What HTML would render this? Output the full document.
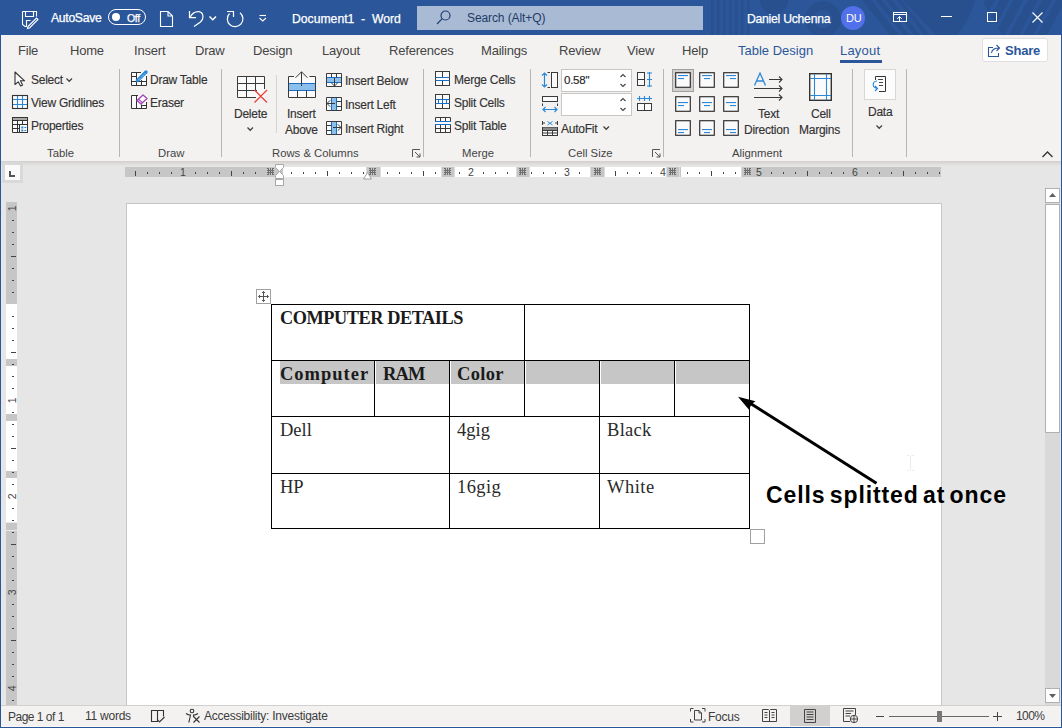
<!DOCTYPE html>
<html><head><meta charset="utf-8">
<style>
*{margin:0;padding:0;box-sizing:border-box}
html,body{width:1062px;height:728px;overflow:hidden;background:#e6e6e6;font-family:"Liberation Sans",sans-serif}
.a{position:absolute}
.t{position:absolute;white-space:nowrap;line-height:1}
svg{position:absolute;overflow:visible}
.tab{position:absolute;top:44px;font-size:13px;color:#444;white-space:nowrap;line-height:1;letter-spacing:-0.2px}
.rb{position:absolute;font-size:12px;letter-spacing:-0.25px;color:#333;white-space:nowrap;line-height:1;-webkit-text-stroke:0.15px #333}
.sep{position:absolute;top:69px;width:1px;height:88px;background:#b8b6b4}
.gl{position:absolute;top:148px;font-size:11.3px;letter-spacing:0;color:#444;white-space:nowrap;line-height:1}
.st{position:absolute;font-size:12px;letter-spacing:-0.25px;color:#3c3c3c;white-space:nowrap;line-height:1}
.wt{position:absolute;color:#fff;font-size:11.8px;white-space:nowrap;line-height:1;-webkit-text-stroke:0.25px #fff}
</style></head><body>
<!-- TITLE BAR -->
<div class="a" style="left:0;top:0;width:1062px;height:35px;background:#2b579a;overflow:hidden">
  <svg width="1062" height="35" style="left:0;top:0">
    <defs><clipPath id="cp"><path d="M982 0 H1062 V35 H1002 Z"/></clipPath></defs>
    <g fill="#28508f">
      <rect x="711" y="0" width="2.5" height="35"/><rect x="717" y="0" width="2.5" height="35"/><rect x="723" y="0" width="2.5" height="35"/>
      <rect x="729" y="0" width="2.5" height="35"/><rect x="735" y="0" width="2.5" height="35"/><rect x="741" y="0" width="2.5" height="35"/><rect x="747" y="0" width="2.5" height="35"/>
      <circle cx="774" cy="0" r="14"/>
      <path d="M862 0 H871 L899 35 H890 Z"/><path d="M875.5 0 H881.5 L909.5 35 H903.5 Z"/><path d="M886 0 H892 L920 35 H914 Z"/><path d="M896.5 0 H901.5 L929.5 35 H924.5 Z"/>
      <path d="M903 0 H975 C972 12 966 25 957 35 H936 Z"/>
      <g clip-path="url(#cp)"><path d="M985 0 H995 L976 35 H966 Z"/><path d="M999.5 0 H1009.5 L990.5 35 H980.5 Z"/><path d="M1013.5 0 H1023.5 L1004.5 35 H994.5 Z"/><path d="M1028 0 H1038 L1019 35 H1009 Z"/><path d="M1042 0 H1052 L1033 35 H1023 Z"/><path d="M1056 0 H1066 L1047 35 H1037 Z"/></g>
    </g>
    <circle cx="823" cy="19" r="13.5" fill="none" stroke="#28508f" stroke-width="8.7"/>
  </svg>
  <!-- save icon -->
  <svg width="20" height="20" style="left:21px;top:10px" fill="none" stroke="#fff" stroke-width="1.1">
    <path d="M1.5 1.5 H15.5 V6.5 M1.5 1.5 V14.5 L4 16.5 H5.5 V10.5 H9.5"/>
    <path d="M4.5 1.5 V6.5 H12.5 V1.5"/>
    <path d="M7 16.5 L15.5 8 L17 9.5 L8.5 18 L6.5 18.5 Z"/>
  </svg>
  <div class="wt" style="left:51px;top:12px;font-size:12.2px;letter-spacing:-0.3px">AutoSave</div>
  <div class="a" style="left:108px;top:9px;width:38px;height:16px;border:1px solid #fff;border-radius:8px"></div>
  <div class="a" style="left:112px;top:13px;width:8px;height:8px;background:#fff;border-radius:50%"></div>
  <div class="wt" style="left:127px;top:13px;font-size:10.5px;letter-spacing:-0.3px">Off</div>
  <!-- new doc -->
  <svg width="14" height="16" style="left:160px;top:11px" fill="none" stroke="#fff" stroke-width="1.1">
    <path d="M0.5 0.5 H8 L12.5 5 V15.5 H0.5 Z M8 0.5 V5 H12.5"/>
  </svg>
  <!-- undo -->
  <svg width="18" height="18" style="left:187px;top:10px" fill="none" stroke="#fff" stroke-width="1.2">
    <path d="M2.5 1 V7.7 H9"/><path d="M3 7.5 C5 3 9 1.4 12 1.6 C14.5 2 16 4.5 16 7 C16 9 15 10.5 13.5 12 L7 16.6"/>
  </svg>
  <svg width="8" height="5" style="left:209px;top:16px" fill="none" stroke="#fff" stroke-width="1.5"><path d="M0.5 0.5 L3.75 3.75 L7 0.5"/></svg>
  <!-- redo -->
  <svg width="18" height="18" style="left:226px;top:10px" fill="none" stroke="#fff" stroke-width="1.2">
    <path d="M3.5 3.5 A7.8 7.8 0 1 0 14 2.8"/><path d="M1 1.5 H7.5 V7"/>
  </svg>
  <svg width="8" height="7" style="left:259px;top:15px" fill="none" stroke="#fff" stroke-width="1.1"><path d="M0.5 0.5 H7"/><path d="M0.5 3 L3.75 6 L7 3"/></svg>
  <div class="wt" style="left:292px;top:13px;font-size:12.2px;letter-spacing:0px;word-spacing:0px">Document1&nbsp; -&nbsp; Word</div>
  <!-- search -->
  <div class="a" style="left:417px;top:6px;width:286px;height:24px;background:#a9bad4"></div>
  <svg width="16" height="16" style="left:436px;top:10px" fill="none" stroke="#1f3f6f" stroke-width="1.2">
    <circle cx="9.5" cy="5.5" r="4.5"/><path d="M6.3 8.7 L1 14"/>
  </svg>
  <div class="t" style="left:467px;top:12px;font-size:12px;color:#1e3a66;letter-spacing:-0.1px">Search (Alt+Q)</div>
  <div class="wt" style="left:747px;top:13px;font-size:12.2px;letter-spacing:-0.25px">Daniel Uchenna</div>
  <div class="a" style="left:841px;top:6px;width:24px;height:24px;border-radius:50%;background:#5170ea"></div>
  <div class="wt" style="left:846px;top:13px;font-size:11px;letter-spacing:-0.2px;-webkit-text-stroke:0">DU</div>
  <!-- ribbon display -->
  <svg width="16" height="12" style="left:893px;top:12px" fill="none" stroke="#fff" stroke-width="1">
    <rect x="0.5" y="0.5" width="13" height="9"/><path d="M0.5 2.5 H13.5"/><path d="M6.5 9.5 V4.5 M4.2 6.8 L6.5 4.5 L8.8 6.8"/>
  </svg>
  <div class="a" style="left:941px;top:16px;width:11px;height:1px;background:#fff"></div>
  <div class="a" style="left:987px;top:12px;width:10px;height:10px;border:1px solid #fff"></div>
  <svg width="12" height="12" style="left:1032px;top:12px" fill="none" stroke="#fff" stroke-width="1.1"><path d="M0.5 0.5 L10.5 10.5 M10.5 0.5 L0.5 10.5"/></svg>
</div>
<!-- blue window borders -->
<div class="a" style="left:0;top:35px;width:1px;height:693px;background:#2b579a"></div>
<div class="a" style="left:1061px;top:35px;width:1px;height:693px;background:#2b579a"></div>

<!-- RIBBON -->
<div class="a" style="left:1px;top:35px;width:1060px;height:126px;background:#f3f2f1"></div>
<div class="tab" style="left:18px">File</div>
<div class="tab" style="left:70px">Home</div>
<div class="tab" style="left:134px">Insert</div>
<div class="tab" style="left:195px">Draw</div>
<div class="tab" style="left:253px">Design</div>
<div class="tab" style="left:322px">Layout</div>
<div class="tab" style="left:389px">References</div>
<div class="tab" style="left:481px">Mailings</div>
<div class="tab" style="left:559px">Review</div>
<div class="tab" style="left:627px">View</div>
<div class="tab" style="left:682px">Help</div>
<div class="tab" style="left:738px;color:#2b579a;letter-spacing:0">Table Design</div>
<div class="tab" style="left:840px;color:#2b579a;letter-spacing:0.2px">Layout</div>
<div class="a" style="left:840px;top:60px;width:42px;height:3px;background:#2b579a"></div>
<div class="a" style="left:982px;top:38px;width:66px;height:24px;background:#fff;border:1px solid #e1dfdd;border-radius:3px"></div>
<svg width="14" height="14" style="left:988px;top:43px" fill="none" stroke="#2b579a" stroke-width="1.1">
  <path d="M5 4.5 H0.5 V13.5 H10.5 V10"/><path d="M3.5 10 C4 6.5 7 5 11 5 M8.5 2 L11.5 5 L8.5 8"/>
</svg>
<div class="t" style="left:1005px;top:44px;font-size:13px;color:#2b579a;font-weight:bold;letter-spacing:-0.2px">Share</div>

<!-- RIBBON GROUPS -->
<div class="sep" style="left:119px"></div>
<div class="sep" style="left:221px"></div>
<div class="sep" style="left:423px"></div>
<div class="sep" style="left:530px"></div>
<div class="sep" style="left:663px"></div>
<div class="sep" style="left:852px"></div>
<div class="sep" style="left:906px"></div>
<div class="a" style="left:276px;top:75px;width:1px;height:58px;background:#d6d4d2"></div>
<!-- Table group -->
<svg width="12" height="16" style="left:14px;top:71px" fill="#fafafa" stroke="#333" stroke-width="1.1"><path d="M1 1 V13.5 L4.2 10.8 L6.6 15 L8.6 14 L6.4 9.8 H10.6 Z" stroke-linejoin="round"/></svg>
<div class="rb" style="left:31px;top:74px">Select</div>
<svg width="7" height="5" style="left:66px;top:78px" fill="none" stroke="#444" stroke-width="1"><path d="M0.5 0.5 L3.2 3.3 L6 0.5" stroke-width="1.3"/></svg>
<svg width="16" height="15" style="left:12px;top:95px" fill="none">
  <rect x="0.5" y="0.5" width="15" height="13" fill="#fafafa" stroke="#333" stroke-width="1.1"/>
  <path d="M5.5 1 V13 M10.5 1 V13 M1 4.5 H15 M1 9.5 H15" stroke="#2b88d8" stroke-width="1.1"/>
</svg>
<div class="rb" style="left:31px;top:97px">View Gridlines</div>
<svg width="17" height="17" style="left:12px;top:117px" fill="none" stroke="#333">
  <rect x="0.5" y="0.5" width="15" height="15" fill="#fafafa" stroke="none"/>
  <rect x="0.5" y="0.5" width="15" height="3" fill="#a8a8a8"/>
  <path d="M0.5 3.5 V15.5 H7.5 M15.5 3.5 V7.5 M5.5 3.5 V15.5 M0.5 7.5 H7.5 M0.5 11.5 H7.5 M10.5 3.5 V7"/>
  <rect x="7.5" y="7.5" width="8" height="8" fill="#fafafa"/>
  <rect x="9.3" y="9.5" width="2" height="2" fill="#2b88d8" stroke="none"/><rect x="9.3" y="12.5" width="2" height="2" fill="#2b88d8" stroke="none"/>
  <rect x="12.3" y="10" width="2" height="1" fill="#2b88d8" stroke="none"/><rect x="12.3" y="13" width="2" height="1" fill="#2b88d8" stroke="none"/>
</svg>
<div class="rb" style="left:31px;top:120px">Properties</div>
<div class="gl" style="left:47px">Table</div>
<!-- Draw group -->
<svg width="18" height="16" style="left:131px;top:71px" fill="none" stroke="#333">
  <rect x="0.5" y="1.5" width="15" height="13" fill="#fafafa" stroke="none"/>
  <path d="M0.5 1.5 H10 M0.5 1.5 V14.5 H15.5 V5 M5.5 1.5 V14.5 M10.5 9 V14.5 M0.5 5.5 H5.5 M0.5 10.5 H15.5"/>
  <path d="M6.5 9.5 L15 1" stroke="#2b88d8" stroke-width="3.4" stroke-linecap="round"/>
  <path d="M7.5 9 L14.5 2" stroke="#fff" stroke-width="0.8" stroke-dasharray="1 1"/>
</svg>
<div class="rb" style="left:150px;top:74px">Draw Table</div>
<svg width="18" height="16" style="left:131px;top:95px" fill="none" stroke="#333">
  <rect x="0.5" y="0.5" width="15" height="13" fill="#fafafa" stroke="none"/>
  <path d="M0.5 0.5 H7 M0.5 0.5 V13.5 H15.5 V7 M5.5 0.5 V13.5 M10.5 9.5 V13.5 M10.5 10.5 H15.5"/>
  <path d="M6 5.5 L12 0 L16 3.5 L10 9 Z" fill="#fff" stroke="#a347ba" stroke-width="1.4" stroke-linejoin="round"/>
  <path d="M7.5 4.2 L11.3 7.6" stroke="#a347ba" stroke-width="1.2"/>
</svg>
<div class="rb" style="left:150px;top:97px">Eraser</div>
<div class="gl" style="left:158px">Draw</div>
<!-- Rows & Columns -->
<svg width="32" height="28" style="left:237px;top:76px" fill="none" stroke="#3a3a3a">
  <rect x="0.5" y="0.5" width="27" height="21" fill="#fafafa" stroke="none"/>
  <path d="M0.5 0.5 H27.5 V13 M0.5 0.5 V21.5 H19 M9.5 0.5 V21.5 M18.5 0.5 V14 M0.5 7.5 H27.5 M0.5 14.5 H20"/>
  <path d="M17.5 14 L30 26.5 M30 14 L17.5 26.5" stroke="#e8413e" stroke-width="1.3"/>
</svg>
<div class="rb" style="left:234px;top:108px">Delete</div>
<svg width="7" height="5" style="left:247px;top:127px" fill="none" stroke="#444"><path d="M0.5 0.5 L3.2 3.3 L6 0.5" stroke-width="1.3"/></svg>
<svg width="30" height="28" style="left:288px;top:71px" fill="none" stroke="#3a3a3a">
  <rect x="0.5" y="5.5" width="27" height="21" fill="#fafafa" stroke="none"/>
  <rect x="0.5" y="12" width="27" height="7.5" fill="#8cc0ec" stroke="none"/>
  <path d="M0.5 12.5 H27.5 M0.5 19.5 H27.5" stroke="#1a6fc4"/>
  <path d="M6 5.5 H0.5 V26.5 H27.5 V5.5 H21.5 M9.5 19.5 V26.5 M18.5 19.5 V26.5"/>
  <path d="M13.5 15 V0.8 M7.5 6.8 L13.5 0.8 L19.5 6.8"/>
</svg>
<div class="rb" style="left:287px;top:108px">Insert</div>
<div class="rb" style="left:285px;top:124px">Above</div>
<svg width="17" height="15" style="left:326px;top:73px" fill="none" stroke="#3a3a3a">
  <rect x="0.5" y="0.5" width="15" height="13" fill="#fafafa" stroke="none"/>
  <rect x="0.5" y="4.5" width="15" height="5" fill="#8cc0ec" stroke="none"/>
  <path d="M0.5 4.5 H15.5 M0.5 9.5 H15.5" stroke="#1a6fc4"/>
  <path d="M0.5 0.5 H15.5 V13.5 H0.5 Z M5.5 0.5 V4.5 M10.5 0.5 V4.5"/>
  <path d="M8.5 5 V13 M5.3 9.8 L8.5 13 L11.7 9.8"/>
</svg>
<div class="rb" style="left:345px;top:75px">Insert Below</div>
<svg width="17" height="15" style="left:326px;top:97px" fill="none" stroke="#3a3a3a">
  <rect x="0.5" y="0.5" width="15" height="13" fill="#fafafa" stroke="none"/>
  <rect x="5.5" y="0.5" width="5" height="13" fill="#8cc0ec" stroke="none"/>
  <path d="M5.5 0.5 V13.5 M10.5 0.5 V13.5" stroke="#1a6fc4"/>
  <path d="M0.5 0.5 H15.5 V13.5 H0.5 Z M10.5 4.5 H15.5 M10.5 9.5 H15.5"/>
  <path d="M9 6.5 H1 M4.2 3.3 L1 6.5 L4.2 9.7"/>
</svg>
<div class="rb" style="left:345px;top:99px">Insert Left</div>
<svg width="17" height="15" style="left:326px;top:121px" fill="none" stroke="#3a3a3a">
  <rect x="0.5" y="0.5" width="15" height="13" fill="#fafafa" stroke="none"/>
  <rect x="5.5" y="0.5" width="5" height="13" fill="#8cc0ec" stroke="none"/>
  <path d="M5.5 0.5 V13.5 M10.5 0.5 V13.5" stroke="#1a6fc4"/>
  <path d="M0.5 0.5 H15.5 V13.5 H0.5 Z M0.5 4.5 H5.5 M0.5 9.5 H5.5"/>
  <path d="M7 6.5 H15 M11.8 3.3 L15 6.5 L11.8 9.7"/>
</svg>
<div class="rb" style="left:345px;top:123px">Insert Right</div>
<div class="gl" style="left:272px">Rows &amp; Columns</div>
<svg width="9" height="9" style="left:412px;top:149px" fill="none" stroke="#555"><path d="M0.5 0.5 H8 M0.5 0.5 V8 M3 3 L8 8 M8 4.5 V8 H4.5"/></svg>
<!-- Merge -->
<svg width="16" height="16" style="left:435px;top:71px" fill="none" stroke="#3a3a3a">
  <rect x="0.5" y="0.5" width="14" height="14" fill="#fafafa"/>
  <path d="M7.5 0.5 V6 M7.5 9.5 V14.5"/>
  <path d="M0.5 6.5 H14.5 M0.5 9.5 H14.5" stroke="#1a6fc4"/>
</svg>
<div class="rb" style="left:454px;top:74px">Merge Cells</div>
<svg width="16" height="16" style="left:435px;top:94px" fill="none" stroke="#3a3a3a">
  <rect x="0.5" y="0.5" width="14" height="14" fill="#fafafa"/>
  <path d="M7.5 0.5 V5 M7.5 10 V14.5"/>
  <path d="M0.5 5.5 H14.5 M0.5 9.5 H14.5 M3.5 5.5 V9.5 M7.5 5.5 V9.5 M11.5 5.5 V9.5" stroke="#1a6fc4"/>
</svg>
<div class="rb" style="left:454px;top:97px">Split Cells</div>
<svg width="17" height="17" style="left:435px;top:117px" fill="none" stroke="#3a3a3a">
  <rect x="0.5" y="0.5" width="15" height="15" fill="#fafafa" stroke="none"/>
  <path d="M0.5 4.5 V0.5 H15.5 V4.5 M5.5 0.5 V4.5 M10.5 0.5 V4.5 M0.5 7.5 V15.5 H15.5 V7.5 M0.5 11.5 H15.5 M5.5 7.5 V15.5 M10.5 7.5 V15.5"/>
  <path d="M0 4.5 H16 M0 7.5 H16" stroke="#1a6fc4"/>
</svg>
<div class="rb" style="left:454px;top:120px">Split Table</div>
<div class="gl" style="left:462px">Merge</div>
<!-- Cell Size -->
<svg width="17" height="17" style="left:542px;top:72px" fill="none" stroke="#3a3a3a">
  <rect x="9.5" y="0.5" width="6" height="15" fill="#fafafa"/>
  <path d="M5.5 0.5 H8 M5.5 15.5 H8"/>
  <path d="M2.5 1 V15 M0 3.5 L2.5 1 L5 3.5 M0 12.5 L2.5 15 L5 12.5" stroke="#2b88d8" stroke-width="1.2"/>
</svg>
<div class="a" style="left:561px;top:69px;width:71px;height:23px;background:#fff;border:1px solid #c8c6c4"></div>
<div class="rb" style="left:564px;top:75px;font-size:11.5px;color:#222">0.58"</div>
<svg width="7" height="14" style="left:620px;top:74px" fill="none" stroke="#444" stroke-width="1.1"><path d="M0.5 3 L3 0.5 L5.5 3 M0.5 10 L3 12.5 L5.5 10"/></svg>
<svg width="17" height="16" style="left:637px;top:72px" fill="none" stroke="#3a3a3a">
  <rect x="0.5" y="0.5" width="7" height="13" fill="#fafafa"/><path d="M0.5 7.5 H7.5"/>
  <path d="M12.5 0 V15 M10 1 H15 M10 7.5 H15 M10 14 H15" stroke="#2b88d8" stroke-width="1.1"/>
</svg>
<svg width="17" height="17" style="left:542px;top:96px" fill="none" stroke="#3a3a3a">
  <rect x="0.5" y="0.5" width="15" height="5" fill="#fafafa"/>
  <path d="M0.5 7.5 V10 M15.5 7.5 V10"/>
  <path d="M1 13.5 H15 M3.5 11 L1 13.5 L3.5 16 M12.5 11 L15 13.5 L12.5 16" stroke="#2b88d8" stroke-width="1.2"/>
</svg>
<div class="a" style="left:561px;top:93px;width:71px;height:23px;background:#fff;border:1px solid #c8c6c4"></div>
<svg width="7" height="14" style="left:620px;top:98px" fill="none" stroke="#444" stroke-width="1.1"><path d="M0.5 3 L3 0.5 L5.5 3 M0.5 10 L3 12.5 L5.5 10"/></svg>
<svg width="16" height="16" style="left:637px;top:96px" fill="none" stroke="#3a3a3a">
  <rect x="0.5" y="7.5" width="14" height="7" fill="#fafafa"/><path d="M7.5 7.5 V14.5"/>
  <path d="M0 2.5 H15 M2.5 0 V5 M7.5 0 V5 M12.5 0 V5" stroke="#2b88d8" stroke-width="1.1"/>
</svg>
<svg width="17" height="16" style="left:542px;top:121px" fill="none" stroke="#3a3a3a">
  <path d="M0.5 0 V4 M15.5 0 V4 M0.5 2 H3 M13 2 H15.5"/>
  <path d="M5.5 0.5 L10.5 4 M10.5 0.5 L5.5 4" stroke="#2b88d8" stroke-width="1"/>
  <rect x="0.5" y="6.5" width="15" height="8" fill="#fafafa"/>
  <rect x="1" y="6.5" width="14" height="3" fill="#8a8a8a" stroke="none"/>
  <path d="M0.5 9.5 H15.5 M0.5 12 H15.5 M5.5 9.5 V14.5 M10.5 9.5 V14.5"/>
</svg>
<div class="rb" style="left:561px;top:123px">AutoFit</div>
<svg width="7" height="5" style="left:603px;top:126px" fill="none" stroke="#444"><path d="M0.5 0.5 L3.2 3.3 L6 0.5" stroke-width="1.3"/></svg>
<div class="gl" style="left:568px">Cell Size</div>
<svg width="9" height="9" style="left:652px;top:149px" fill="none" stroke="#555"><path d="M0.5 0.5 H8 M0.5 0.5 V8 M3 3 L8 8 M8 4.5 V8 H4.5"/></svg>
<!-- Alignment -->
<div class="a" style="left:672px;top:69px;width:22px;height:23px;background:#d2d0ce;border:1px solid #a19f9d"></div>
<svg width="16" height="16" style="left:675px;top:72px"><rect x="0.7" y="0.7" width="14.6" height="14.6" fill="#fafafa" stroke="#333" stroke-width="1.2"/><rect x="3" y="3" width="10" height="1.1" fill="#2b88d8"/><rect x="3" y="6" width="6" height="1.1" fill="#2b88d8"/></svg>
<svg width="16" height="16" style="left:699px;top:72px"><rect x="0.7" y="0.7" width="14.6" height="14.6" fill="#fafafa" stroke="#333" stroke-width="1.2"/><rect x="3" y="3" width="10" height="1.1" fill="#2b88d8"/><rect x="5" y="6" width="6" height="1.1" fill="#2b88d8"/></svg>
<svg width="16" height="16" style="left:723px;top:72px"><rect x="0.7" y="0.7" width="14.6" height="14.6" fill="#fafafa" stroke="#333" stroke-width="1.2"/><rect x="3" y="3" width="10" height="1.1" fill="#2b88d8"/><rect x="7" y="6" width="6" height="1.1" fill="#2b88d8"/></svg>
<svg width="16" height="16" style="left:675px;top:96px"><rect x="0.7" y="0.7" width="14.6" height="14.6" fill="#fafafa" stroke="#333" stroke-width="1.2"/><rect x="3" y="6" width="10" height="1.1" fill="#2b88d8"/><rect x="3" y="9" width="6" height="1.1" fill="#2b88d8"/></svg>
<svg width="16" height="16" style="left:699px;top:96px"><rect x="0.7" y="0.7" width="14.6" height="14.6" fill="#fafafa" stroke="#333" stroke-width="1.2"/><rect x="3" y="6" width="10" height="1.1" fill="#2b88d8"/><rect x="5" y="9" width="6" height="1.1" fill="#2b88d8"/></svg>
<svg width="16" height="16" style="left:723px;top:96px"><rect x="0.7" y="0.7" width="14.6" height="14.6" fill="#fafafa" stroke="#333" stroke-width="1.2"/><rect x="3" y="6" width="10" height="1.1" fill="#2b88d8"/><rect x="7" y="9" width="6" height="1.1" fill="#2b88d8"/></svg>
<svg width="16" height="16" style="left:675px;top:120px"><rect x="0.7" y="0.7" width="14.6" height="14.6" fill="#fafafa" stroke="#333" stroke-width="1.2"/><rect x="3" y="9" width="10" height="1.1" fill="#2b88d8"/><rect x="3" y="12" width="6" height="1.1" fill="#2b88d8"/></svg>
<svg width="16" height="16" style="left:699px;top:120px"><rect x="0.7" y="0.7" width="14.6" height="14.6" fill="#fafafa" stroke="#333" stroke-width="1.2"/><rect x="3" y="9" width="10" height="1.1" fill="#2b88d8"/><rect x="5" y="12" width="6" height="1.1" fill="#2b88d8"/></svg>
<svg width="16" height="16" style="left:723px;top:120px"><rect x="0.7" y="0.7" width="14.6" height="14.6" fill="#fafafa" stroke="#333" stroke-width="1.2"/><rect x="3" y="9" width="10" height="1.1" fill="#2b88d8"/><rect x="7" y="12" width="6" height="1.1" fill="#2b88d8"/></svg>

<svg width="32" height="30" style="left:753px;top:72px" fill="none">
  <path d="M1.5 13.5 L7 1 L12.5 13.5 M3.5 9 H10.5" stroke="#2b88d8" stroke-width="1.3"/>
  <path d="M16 7.5 H29 M26 4.5 L29 7.5 L26 10.5 M1 16.5 H29 M26 13.5 L29 16.5 L26 19.5 M1 25.5 H29 M26 22.5 L29 25.5 L26 28.5" stroke="#3a3a3a" stroke-width="1.1"/>
</svg>
<div class="rb" style="left:758px;top:108px">Text</div>
<div class="rb" style="left:744px;top:124px">Direction</div>
<svg width="24" height="29" style="left:809px;top:73px" fill="none">
  <rect x="0.7" y="0.7" width="21.6" height="26.6" fill="#fafafa" stroke="#333" stroke-width="1.4"/>
  <path d="M5.5 1 V27 M17.5 1 V27 M1 5.5 H22 M1 22.5 H22" stroke="#2b88d8" stroke-width="1.1"/>
</svg>
<div class="rb" style="left:811px;top:108px">Cell</div>
<div class="rb" style="left:799px;top:124px">Margins</div>
<div class="gl" style="left:732px">Alignment</div>
<!-- Data -->
<div class="a" style="left:864px;top:69px;width:32px;height:31px;background:#fcfcfc;border:1px solid #d8d6d4"></div>
<svg width="16" height="17" style="left:871px;top:76px" fill="none">
  <path d="M4.5 4 V0.5 H14.5 V15.5 H8" stroke="#333"/><path d="M7 3.5 H12 M8 6.5 H12 M8 9.5 H12" stroke="#333" stroke-width="0.9"/>
  <path d="M6 5 C1.5 5.5 0.5 11 6 12.5 M4 10 L6.5 12.5 L4 15" stroke="#2b88d8" stroke-width="1.2"/>
</svg>
<div class="rb" style="left:868px;top:106px">Data</div>
<svg width="7" height="5" style="left:876px;top:125px" fill="none" stroke="#444"><path d="M0.5 0.5 L3.2 3.3 L6 0.5" stroke-width="1.3"/></svg>
<svg width="11" height="7" style="left:1042px;top:151px" fill="none" stroke="#333" stroke-width="1.3"><path d="M0.5 6 L5.5 1 L10.5 6"/></svg>
<!-- ribbon shadow -->
<div class="a" style="left:1px;top:161px;width:1060px;height:5px;background:linear-gradient(#d2d0ce,#e6e6e6)"></div>

<!-- RULER -->
<div class="a" style="left:2px;top:162px;width:21px;height:21px;background:#d9d9d9"></div>
<div class="a" style="left:5px;top:165px;width:15px;height:15px;background:#fafafa"></div>
<svg width="7" height="7" style="left:9px;top:171px"><path d="M0 0 H2 V4 H6 V6 H0 Z" fill="#555"/></svg>
<div class="a" style="left:125px;top:167px;width:816px;height:10px;background:#c6c6c6"></div>
<div class="a" style="left:283px;top:167px;width:84px;height:10px;background:#fff"></div>
<div class="a" style="left:380px;top:167px;width:62px;height:10px;background:#fff"></div>
<div class="a" style="left:454px;top:167px;width:63px;height:10px;background:#fff"></div>
<div class="a" style="left:529px;top:167px;width:63px;height:10px;background:#fff"></div>
<div class="a" style="left:604px;top:167px;width:63px;height:10px;background:#fff"></div>
<div class="a" style="left:681px;top:167px;width:61px;height:10px;background:#fff"></div>
<div class="t" style="left:180px;top:167px;font-size:10.5px;color:#444">1</div>
<div class="t" style="left:468px;top:167px;font-size:10.5px;color:#444">2</div>
<div class="t" style="left:564px;top:167px;font-size:10.5px;color:#444">3</div>
<div class="t" style="left:660px;top:167px;font-size:10.5px;color:#444">4</div>
<div class="t" style="left:756px;top:167px;font-size:10.5px;color:#444">5</div>
<div class="t" style="left:852px;top:167px;font-size:10.5px;color:#444">6</div>
<svg width="1062" height="200" style="left:0;top:0" fill="none" stroke="#444" stroke-width="1"><path d="M135.5 171 V176 M147.5 172 V174 M159.5 172 V174 M171.5 172 V174 M195.5 172 V174 M207.5 172 V174 M219.5 172 V174 M231.5 171 V176 M243.5 172 V174 M255.5 172 V174 M267.5 172 V174 M291.5 172 V174 M303.5 172 V174 M315.5 172 V174 M327.5 171 V176 M339.5 172 V174 M351.5 172 V174 M363.5 172 V174 M387.5 172 V174 M399.5 172 V174 M411.5 172 V174 M423.5 171 V176 M435.5 172 V174 M447.5 172 V174 M459.5 172 V174 M483.5 172 V174 M495.5 172 V174 M507.5 172 V174 M519.5 171 V176 M531.5 172 V174 M543.5 172 V174 M555.5 172 V174 M579.5 172 V174 M591.5 172 V174 M603.5 172 V174 M615.5 171 V176 M627.5 172 V174 M639.5 172 V174 M651.5 172 V174 M675.5 172 V174 M687.5 172 V174 M699.5 172 V174 M711.5 171 V176 M723.5 172 V174 M735.5 172 V174 M747.5 172 V174 M771.5 172 V174 M783.5 172 V174 M795.5 172 V174 M807.5 171 V176 M819.5 172 V174 M831.5 172 V174 M843.5 172 V174 M867.5 172 V174 M879.5 172 V174 M891.5 172 V174 M903.5 171 V176 M915.5 172 V174 M927.5 172 V174 M939.5 172 V174 "/></svg>
<div class="a" style="left:264px;top:167px;width:11px;height:10px;background:#c6c6c6"></div>
<div class="a" style="left:366px;top:167px;width:15px;height:10px;background:#c6c6c6;border-left:1px solid #dcdcdc;border-right:1px solid #dcdcdc"></div>
<div class="a" style="left:441px;top:167px;width:14px;height:10px;background:#c6c6c6;border-left:1px solid #dcdcdc;border-right:1px solid #dcdcdc"></div>
<div class="a" style="left:516px;top:167px;width:14px;height:10px;background:#c6c6c6;border-left:1px solid #dcdcdc;border-right:1px solid #dcdcdc"></div>
<div class="a" style="left:590px;top:167px;width:15px;height:10px;background:#c6c6c6;border-left:1px solid #dcdcdc;border-right:1px solid #dcdcdc"></div>
<div class="a" style="left:666px;top:167px;width:14px;height:10px;background:#c6c6c6;border-left:1px solid #dcdcdc;border-right:1px solid #dcdcdc"></div>
<div class="a" style="left:741px;top:167px;width:14px;height:10px;background:#c6c6c6;border-left:1px solid #dcdcdc"></div>
<svg width="8" height="8" style="left:267px;top:168px"><path d="M0 0h1v1h-1zM1 0h1v1h-1zM3 0h1v1h-1zM5 0h1v1h-1zM6 0h1v1h-1zM1 1h1v1h-1zM3 1h1v1h-1zM5 1h1v1h-1zM0 2h1v1h-1zM1 2h1v1h-1zM2 2h1v1h-1zM3 2h1v1h-1zM4 2h1v1h-1zM5 2h1v1h-1zM6 2h1v1h-1zM1 3h1v1h-1zM3 3h1v1h-1zM5 3h1v1h-1zM0 4h1v1h-1zM1 4h1v1h-1zM2 4h1v1h-1zM3 4h1v1h-1zM4 4h1v1h-1zM5 4h1v1h-1zM6 4h1v1h-1zM1 5h1v1h-1zM3 5h1v1h-1zM5 5h1v1h-1zM0 6h1v1h-1zM1 6h1v1h-1zM3 6h1v1h-1zM5 6h1v1h-1zM6 6h1v1h-1z" fill="#6e6e6e"/></svg>
<svg width="8" height="8" style="left:369px;top:168px"><path d="M0 0h1v1h-1zM1 0h1v1h-1zM3 0h1v1h-1zM5 0h1v1h-1zM6 0h1v1h-1zM1 1h1v1h-1zM3 1h1v1h-1zM5 1h1v1h-1zM0 2h1v1h-1zM1 2h1v1h-1zM2 2h1v1h-1zM3 2h1v1h-1zM4 2h1v1h-1zM5 2h1v1h-1zM6 2h1v1h-1zM1 3h1v1h-1zM3 3h1v1h-1zM5 3h1v1h-1zM0 4h1v1h-1zM1 4h1v1h-1zM2 4h1v1h-1zM3 4h1v1h-1zM4 4h1v1h-1zM5 4h1v1h-1zM6 4h1v1h-1zM1 5h1v1h-1zM3 5h1v1h-1zM5 5h1v1h-1zM0 6h1v1h-1zM1 6h1v1h-1zM3 6h1v1h-1zM5 6h1v1h-1zM6 6h1v1h-1z" fill="#6e6e6e"/></svg>
<svg width="8" height="8" style="left:444px;top:168px"><path d="M0 0h1v1h-1zM1 0h1v1h-1zM3 0h1v1h-1zM5 0h1v1h-1zM6 0h1v1h-1zM1 1h1v1h-1zM3 1h1v1h-1zM5 1h1v1h-1zM0 2h1v1h-1zM1 2h1v1h-1zM2 2h1v1h-1zM3 2h1v1h-1zM4 2h1v1h-1zM5 2h1v1h-1zM6 2h1v1h-1zM1 3h1v1h-1zM3 3h1v1h-1zM5 3h1v1h-1zM0 4h1v1h-1zM1 4h1v1h-1zM2 4h1v1h-1zM3 4h1v1h-1zM4 4h1v1h-1zM5 4h1v1h-1zM6 4h1v1h-1zM1 5h1v1h-1zM3 5h1v1h-1zM5 5h1v1h-1zM0 6h1v1h-1zM1 6h1v1h-1zM3 6h1v1h-1zM5 6h1v1h-1zM6 6h1v1h-1z" fill="#6e6e6e"/></svg>
<svg width="8" height="8" style="left:519px;top:168px"><path d="M0 0h1v1h-1zM1 0h1v1h-1zM3 0h1v1h-1zM5 0h1v1h-1zM6 0h1v1h-1zM1 1h1v1h-1zM3 1h1v1h-1zM5 1h1v1h-1zM0 2h1v1h-1zM1 2h1v1h-1zM2 2h1v1h-1zM3 2h1v1h-1zM4 2h1v1h-1zM5 2h1v1h-1zM6 2h1v1h-1zM1 3h1v1h-1zM3 3h1v1h-1zM5 3h1v1h-1zM0 4h1v1h-1zM1 4h1v1h-1zM2 4h1v1h-1zM3 4h1v1h-1zM4 4h1v1h-1zM5 4h1v1h-1zM6 4h1v1h-1zM1 5h1v1h-1zM3 5h1v1h-1zM5 5h1v1h-1zM0 6h1v1h-1zM1 6h1v1h-1zM3 6h1v1h-1zM5 6h1v1h-1zM6 6h1v1h-1z" fill="#6e6e6e"/></svg>
<svg width="8" height="8" style="left:594px;top:168px"><path d="M0 0h1v1h-1zM1 0h1v1h-1zM3 0h1v1h-1zM5 0h1v1h-1zM6 0h1v1h-1zM1 1h1v1h-1zM3 1h1v1h-1zM5 1h1v1h-1zM0 2h1v1h-1zM1 2h1v1h-1zM2 2h1v1h-1zM3 2h1v1h-1zM4 2h1v1h-1zM5 2h1v1h-1zM6 2h1v1h-1zM1 3h1v1h-1zM3 3h1v1h-1zM5 3h1v1h-1zM0 4h1v1h-1zM1 4h1v1h-1zM2 4h1v1h-1zM3 4h1v1h-1zM4 4h1v1h-1zM5 4h1v1h-1zM6 4h1v1h-1zM1 5h1v1h-1zM3 5h1v1h-1zM5 5h1v1h-1zM0 6h1v1h-1zM1 6h1v1h-1zM3 6h1v1h-1zM5 6h1v1h-1zM6 6h1v1h-1z" fill="#6e6e6e"/></svg>
<svg width="8" height="8" style="left:669px;top:168px"><path d="M0 0h1v1h-1zM1 0h1v1h-1zM3 0h1v1h-1zM5 0h1v1h-1zM6 0h1v1h-1zM1 1h1v1h-1zM3 1h1v1h-1zM5 1h1v1h-1zM0 2h1v1h-1zM1 2h1v1h-1zM2 2h1v1h-1zM3 2h1v1h-1zM4 2h1v1h-1zM5 2h1v1h-1zM6 2h1v1h-1zM1 3h1v1h-1zM3 3h1v1h-1zM5 3h1v1h-1zM0 4h1v1h-1zM1 4h1v1h-1zM2 4h1v1h-1zM3 4h1v1h-1zM4 4h1v1h-1zM5 4h1v1h-1zM6 4h1v1h-1zM1 5h1v1h-1zM3 5h1v1h-1zM5 5h1v1h-1zM0 6h1v1h-1zM1 6h1v1h-1zM3 6h1v1h-1zM5 6h1v1h-1zM6 6h1v1h-1z" fill="#6e6e6e"/></svg>
<svg width="8" height="8" style="left:744px;top:168px"><path d="M0 0h1v1h-1zM1 0h1v1h-1zM3 0h1v1h-1zM5 0h1v1h-1zM6 0h1v1h-1zM1 1h1v1h-1zM3 1h1v1h-1zM5 1h1v1h-1zM0 2h1v1h-1zM1 2h1v1h-1zM2 2h1v1h-1zM3 2h1v1h-1zM4 2h1v1h-1zM5 2h1v1h-1zM6 2h1v1h-1zM1 3h1v1h-1zM3 3h1v1h-1zM5 3h1v1h-1zM0 4h1v1h-1zM1 4h1v1h-1zM2 4h1v1h-1zM3 4h1v1h-1zM4 4h1v1h-1zM5 4h1v1h-1zM6 4h1v1h-1zM1 5h1v1h-1zM3 5h1v1h-1zM5 5h1v1h-1zM0 6h1v1h-1zM1 6h1v1h-1zM3 6h1v1h-1zM5 6h1v1h-1zM6 6h1v1h-1z" fill="#6e6e6e"/></svg>

<svg width="10" height="24" style="left:275px;top:164px" fill="#fff" stroke="#a8a8a8" stroke-width="1">
  <path d="M0.5 0.5 H8.5 V3.5 L4.5 7.5 L0.5 3.5 Z"/><path d="M4.5 7.5 L8.5 11.5 V14.5 H0.5 V11.5 Z"/><rect x="0.5" y="15.5" width="8" height="6"/>
</svg>
<svg width="10" height="8" style="left:363px;top:172px" fill="#fff" stroke="#a0a0a0" stroke-width="1"><path d="M4.5 0.5 L8.5 7 H0.5 Z"/></svg>

<!-- VERTICAL RULER -->
<div class="a" style="left:6px;top:202px;width:11px;height:503px;background:#c6c6c6"></div>
<div class="a" style="left:6px;top:304px;width:11px;height:218px;background:#fff"></div>
<div class="a" style="left:6px;top:359px;width:11px;height:7px;background:#c6c6c6"></div>
<div class="a" style="left:6px;top:414px;width:11px;height:7px;background:#c6c6c6"></div>
<div class="a" style="left:6px;top:471px;width:11px;height:7px;background:#c6c6c6"></div>
<div class="a" style="left:6px;top:522px;width:11px;height:1px;background:#e8e8e8"></div>
<div class="a" style="left:6px;top:523px;width:11px;height:7px;background:#c6c6c6"></div>
<div class="a" style="left:6px;top:530px;width:11px;height:1px;background:#e8e8e8"></div>
<div class="t" style="left:7px;top:203px;font-size:10.5px;color:#444;transform:rotate(-90deg);transform-origin:50% 50%;width:10px;text-align:center">1</div>
<div class="t" style="left:7px;top:395px;font-size:10.5px;color:#444;transform:rotate(-90deg);transform-origin:50% 50%;width:10px;text-align:center">1</div>
<div class="t" style="left:7px;top:491px;font-size:10.5px;color:#444;transform:rotate(-90deg);transform-origin:50% 50%;width:10px;text-align:center">2</div>
<div class="t" style="left:7px;top:587px;font-size:10.5px;color:#444;transform:rotate(-90deg);transform-origin:50% 50%;width:10px;text-align:center">3</div>
<div class="t" style="left:7px;top:683px;font-size:10.5px;color:#444;transform:rotate(-90deg);transform-origin:50% 50%;width:10px;text-align:center">4</div>
<svg width="30" height="728" style="left:0;top:0" fill="none" stroke="#444" stroke-width="1"><path d="M12 220.5 H14 M12 232.5 H14 M12 244.5 H14 M11 256.5 H16 M12 268.5 H14 M12 280.5 H14 M12 292.5 H14 M12 316.5 H14 M12 328.5 H14 M12 340.5 H14 M11 352.5 H16 M12 364.5 H14 M12 376.5 H14 M12 388.5 H14 M12 412.5 H14 M12 424.5 H14 M12 436.5 H14 M11 448.5 H16 M12 460.5 H14 M12 472.5 H14 M12 484.5 H14 M12 508.5 H14 M12 520.5 H14 M12 532.5 H14 M11 544.5 H16 M12 556.5 H14 M12 568.5 H14 M12 580.5 H14 M12 604.5 H14 M12 616.5 H14 M12 628.5 H14 M11 640.5 H16 M12 652.5 H14 M12 664.5 H14 M12 676.5 H14 M12 700.5 H14 "/></svg>

<!-- PAGE -->
<div class="a" style="left:126px;top:203px;width:816px;height:510px;background:#fff;border:1px solid #c6c6c6"></div>
<!-- table move handle -->
<svg width="15" height="15" style="left:256px;top:289px" fill="none">
  <rect x="0.5" y="0.5" width="14" height="14" fill="#fff" stroke="#a0a0a0"/>
  <path d="M7.5 2.5 V12.5 M2.5 7.5 H12.5" stroke="#555"/>
  <path d="M6 4 L7.5 2.5 L9 4 M6 11 L7.5 12.5 L9 11 M4 6 L2.5 7.5 L4 9 M11 6 L12.5 7.5 L11 9" stroke="#555"/>
</svg>
<!-- shading -->
<div class="a" style="left:280px;top:361px;width:94px;height:23px;background:#c6c6c6"></div>
<div class="a" style="left:376px;top:361px;width:73px;height:23px;background:#c6c6c6"></div>
<div class="a" style="left:451px;top:361px;width:73px;height:23px;background:#c6c6c6"></div>
<div class="a" style="left:526px;top:361px;width:73px;height:23px;background:#c6c6c6"></div>
<div class="a" style="left:601px;top:361px;width:73px;height:23px;background:#c6c6c6"></div>
<div class="a" style="left:676px;top:361px;width:73px;height:23px;background:#c6c6c6"></div>
<!-- table borders -->
<svg width="1062" height="728" style="left:0;top:0" fill="none" stroke="#000" stroke-width="1" shape-rendering="crispEdges">
  <path d="M271.5 304.5 H749.5 V528.5 H271.5 Z"/>
  <path d="M271.5 360.5 H749.5 M271.5 416.5 H749.5 M271.5 473.5 H749.5"/>
  <path d="M524.5 304.5 V416.5 M374.5 360.5 V416.5 M449.5 360.5 V528.5 M599.5 360.5 V528.5 M674.5 360.5 V416.5"/>
</svg>
<div class="t" style="left:280px;top:309px;font-family:'Liberation Serif',serif;font-weight:bold;font-size:18.3px;color:#1b1b1b;letter-spacing:-0.45px">COMPUTER DETAILS</div>
<div class="t" style="left:280px;top:365px;font-family:'Liberation Serif',serif;font-weight:bold;font-size:18.5px;color:#1b1b1b;letter-spacing:1.0px">Computer</div>
<div class="t" style="left:383px;top:365px;font-family:'Liberation Serif',serif;font-weight:bold;font-size:18.5px;color:#1b1b1b;letter-spacing:-0.8px">RAM</div>
<div class="t" style="left:457px;top:365px;font-family:'Liberation Serif',serif;font-weight:bold;font-size:18.5px;color:#1b1b1b;letter-spacing:0.3px">Color</div>
<div class="t" style="left:280px;top:421px;font-family:'Liberation Serif',serif;font-size:18.5px;color:#2a2a2a">Dell</div>
<div class="t" style="left:280px;top:478px;font-family:'Liberation Serif',serif;font-size:18.5px;color:#2a2a2a">HP</div>
<div class="t" style="left:457px;top:421px;font-family:'Liberation Serif',serif;font-size:18.5px;color:#2a2a2a">4gig</div>
<div class="t" style="left:457px;top:478px;font-family:'Liberation Serif',serif;font-size:18.5px;color:#2a2a2a;letter-spacing:0.4px">16gig</div>
<div class="t" style="left:607px;top:421px;font-family:'Liberation Serif',serif;font-size:18.5px;color:#2a2a2a;letter-spacing:0.3px">Black</div>
<div class="t" style="left:607px;top:478px;font-family:'Liberation Serif',serif;font-size:18.5px;color:#2a2a2a;letter-spacing:0.5px">White</div>
<!-- resize handle -->
<div class="a" style="left:750px;top:529px;width:15px;height:15px;background:#fff;border:1px solid #a0a0a0"></div>
<!-- arrow -->
<svg width="1062" height="728" style="left:0;top:0">
  <path d="M876.5 483.2 L749 402.5" stroke="#000" stroke-width="3" fill="none"/>
  <path d="M738 396.8 L755.5 401.2 L751.5 404 L749 409.8 Z" fill="#000"/>
</svg>
<div class="t" style="left:766px;top:484px;font-size:23px;font-weight:bold;color:#000;letter-spacing:0.9px;word-spacing:-3px">Cells splitted at once</div>
<!-- cursor -->
<svg width="8" height="16" style="left:907px;top:455px" fill="none" stroke="#ebebeb"><path d="M0 0.5 H2.5 M4.5 0.5 H7 M3.5 1 V15 M0 15.5 H2.5 M4.5 15.5 H7"/></svg>

<!-- SCROLLBAR -->
<div class="a" style="left:1045px;top:188px;width:15px;height:517px;background:#d9d9d9"></div>
<div class="a" style="left:1045px;top:188px;width:15px;height:15px;background:#fff;border:1px solid #b0b0b0"></div>
<svg width="8" height="4" style="left:1049px;top:193px"><path d="M0 4 L3.5 0 L7 4 Z" fill="#606060"/></svg>
<div class="a" style="left:1045px;top:204px;width:15px;height:229px;background:#fff;border:1px solid #b0b0b0"></div>
<div class="a" style="left:1045px;top:688px;width:15px;height:15px;background:#fff;border:1px solid #b0b0b0"></div>
<svg width="8" height="4" style="left:1049px;top:694px"><path d="M0 0 L3.5 4 L7 0 Z" fill="#606060"/></svg>

<!-- STATUS BAR -->
<div class="a" style="left:1px;top:705px;width:1060px;height:1px;background:#d2d0ce"></div>
<div class="a" style="left:1px;top:706px;width:1060px;height:21px;background:#f3f2f1"></div>
<div class="a" style="left:1px;top:726px;width:1060px;height:1px;background:#f8f8f8"></div>
<div class="a" style="left:0;top:727px;width:1062px;height:1px;background:#2b579a"></div>
<div class="st" style="left:8px;top:711px;letter-spacing:-0.5px">Page 1 of 1</div>
<div class="st" style="left:85px;top:710px">11 words</div>
<svg width="16" height="14" style="left:151px;top:710px" fill="none" stroke="#333" stroke-width="1.1"><path d="M0.5 0.5 H6.5 V11.5 H0.5 Z M6.5 0.5 H12.5 V6.5 M6.5 9.5 L8.5 12 L13.5 7"/></svg>
<svg width="16" height="16" style="left:185px;top:708px" fill="none" stroke="#333" stroke-width="1.1">
  <circle cx="7" cy="3" r="1.8"/><path d="M1 5.5 C2.5 6.5 4.5 7.2 5.5 7 C5 9.5 4.5 12 3.8 14.5 M13 5.5 C11.5 6.5 9.5 7.2 8.5 7 V9"/><path d="M8.5 8.5 L14.5 14.5 M14.5 8.5 L8.5 14.5"/>
</svg>
<div class="st" style="left:204px;top:710px">Accessibility: Investigate</div>
<svg width="16" height="15" style="left:690px;top:708px" fill="none" stroke="#444">
  <path d="M0.5 3.5 V0.5 H3.5 M12 0.5 H15 V3.5 M15 11 V14 H12 M3.5 14 H0.5 V11"/><path d="M4.5 2.5 H9 L11.5 5 V12 H4.5 Z M9 2.5 V5 H11.5"/>
</svg>
<div class="st" style="left:708px;top:711px">Focus</div>
<svg width="15" height="13" style="left:762px;top:709px" fill="none" stroke="#444"><path d="M0.5 0.5 H6.5 L7.5 1.5 L8.5 0.5 H14.5 V12.5 H0.5 Z M7.5 1.5 V12.5 M2.5 3.5 H5.5 M2.5 6 H5.5 M2.5 8.5 H5.5 M9.5 3.5 H12.5 M9.5 6 H12.5 M9.5 8.5 H12.5"/></svg>
<div class="a" style="left:790px;top:706px;width:40px;height:20px;background:#d2d0ce"></div>
<svg width="12" height="14" style="left:804px;top:709px" fill="none" stroke="#444"><path d="M0.5 0.5 H11.5 V13.5 H0.5 Z M2.5 3 H9.5 M2.5 5.5 H9.5 M2.5 8 H9.5 M2.5 10.5 H9.5"/></svg>
<svg width="16" height="15" style="left:843px;top:708px" fill="none" stroke="#444"><path d="M7 13.5 H0.5 V0.5 H12.5 V7 M2.5 3 H10.5 M2.5 5.5 H8 M2.5 8 H7"/><circle cx="11" cy="11" r="3.7" fill="#f3f2f1"/><path d="M7.3 11 H14.7 M11 7.3 V14.7"/></svg>
<div class="a" style="left:876px;top:716px;width:8px;height:1px;background:#444"></div>
<div class="a" style="left:889px;top:716px;width:100px;height:1px;background:#666"></div>
<div class="a" style="left:937px;top:711px;width:5px;height:11px;background:#777"></div>
<svg width="10" height="10" style="left:993px;top:711px" fill="none" stroke="#444"><path d="M0 5.5 H9 M4.5 1 V10"/></svg>
<div class="st" style="left:1016px;top:710px;letter-spacing:-0.6px">100%</div>
</body></html>
